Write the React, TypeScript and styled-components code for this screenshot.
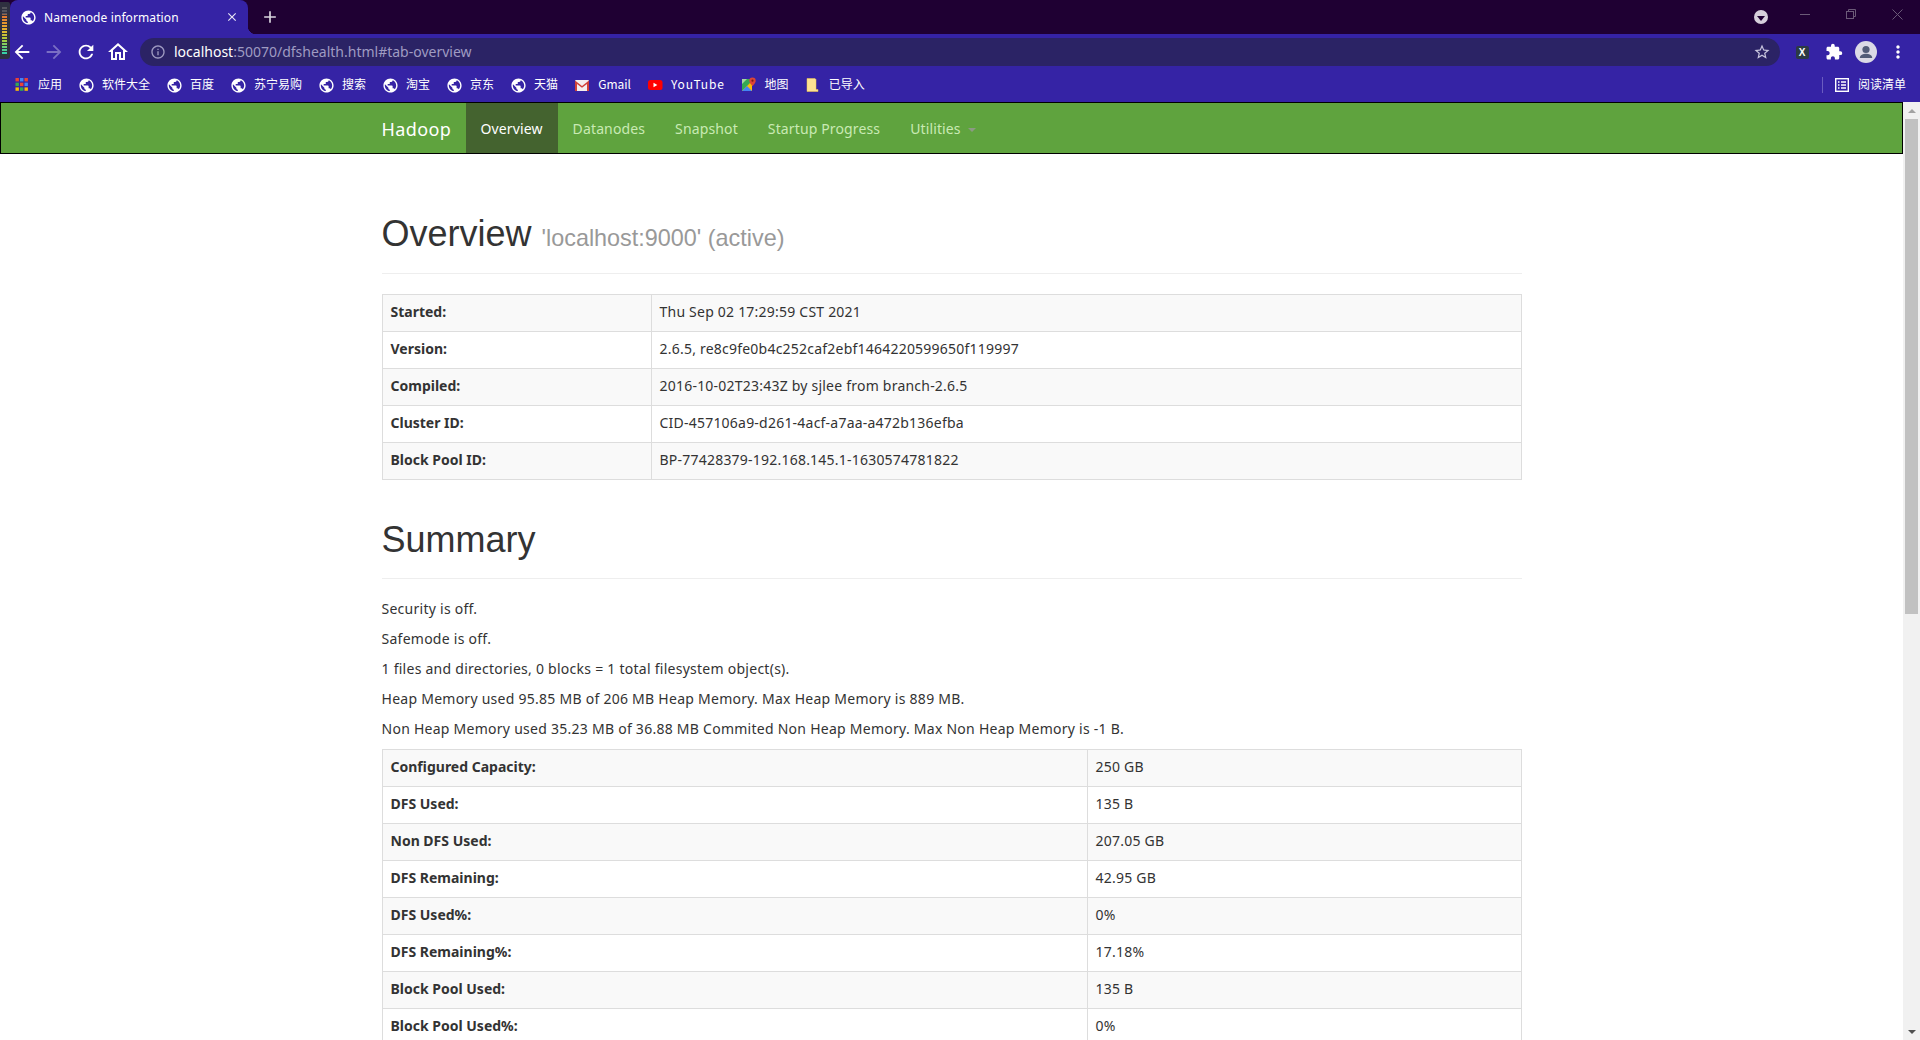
import React from "react";
import styled, { createGlobalStyle } from "styled-components";
import {
  MdArrowBack,
  MdArrowForward,
  MdRefresh,
  MdOutlineHome,
  MdInfoOutline,
  MdStarBorder,
  MdExtension,
  MdMoreVert,
  MdPublic,
  MdClose,
  MdAdd,
} from "react-icons/md";

const uiFont = `"Noto Sans", "Noto Sans CJK SC", sans-serif`;
const cjkFont = `"Noto Sans CJK SC", "Noto Sans", sans-serif`;
const headFont = `"Liberation Sans", Arial, sans-serif`;

const chrome = "#3523a5";

const GlobalStyle = createGlobalStyle`
  * { box-sizing: border-box; }
  html, body { margin: 0; padding: 0; height: 100%; overflow: hidden; }
  body { font-family: ${uiFont}; font-size: 14px; line-height: 20px; color: #333; background: #fff; }
`;

const Window = styled.div`
  position: relative;
  display: flex;
  flex-direction: column;
  height: 100vh;
  overflow: hidden;
`;

const Gauge = styled.div`
  position: absolute;
  left: 0;
  top: 2px;
  width: 10px;
  height: 57px;
  z-index: 3;
  background: #2f3040;
  border-radius: 0 2px 3px 0;
  padding: 5px 3px 5px 2px;
`;

const GaugeBars = styled.div`
  height: 100%;
  background:
    repeating-linear-gradient(to bottom, transparent 0 2px, #2f3040 2px 3px),
    linear-gradient(to bottom, #55555e 0 14%, #e2742f 18%, #e6b62f 50%, #a8cf3c 70%, #2fd0b0 100%);
`;

const TabStrip = styled.div`
  height: 34px;
  display: flex;
  align-items: stretch;
  background: #1f0033;
  flex: none;
`;

const Tab = styled.div`
  position: relative;
  margin-left: 10px;
  width: 238px;
  display: flex;
  align-items: center;
  padding: 0 10px 0 10px;
  gap: 7px;
  background: ${chrome};
  border-radius: 8px 8px 0 0;
  color: #fff;
  font-size: 12px;

  &::after {
    content: "";
    position: absolute;
    left: 100%;
    bottom: 0;
    width: 8px;
    height: 8px;
    background: radial-gradient(circle at 100% 0, transparent 8px, ${chrome} 8.5px);
  }
`;

const TabTitle = styled.span`
  flex: 1;
  padding-top: 1px;
  letter-spacing: 0.1px;
  white-space: nowrap;
`;

const TabClose = styled(MdClose)`
  color: #e8e6f4;
  margin-right: -1px;
`;

const NewTab = styled.div`
  width: 28px;
  margin-left: 8px;
  display: flex;
  align-items: center;
  justify-content: center;
  color: #d9d5de;
`;

const StripRight = styled.div`
  margin-left: auto;
  display: flex;
  align-items: flex-start;
`;

const ProfileDrop = styled.div`
  width: 14px;
  height: 14px;
  margin: 10px 14px 0 0;
  border-radius: 50%;
  background: #d6cfdb;
  display: flex;
  align-items: center;
  justify-content: center;

  &::before {
    content: "";
    margin-top: 2px;
    border-left: 4px solid transparent;
    border-right: 4px solid transparent;
    border-top: 5px solid #1f0033;
  }
`;

const WinButton = styled.div`
  width: 46px;
  height: 28px;
  display: flex;
  align-items: center;
  justify-content: center;
`;

const Toolbar = styled.div`
  height: 34px;
  flex: none;
  display: flex;
  align-items: center;
  padding: 2px 6px 0 6px;
  background: ${chrome};
`;

const ToolButton = styled.div<{ $dim?: boolean }>`
  width: 32px;
  height: 28px;
  flex: none;
  display: flex;
  align-items: center;
  justify-content: center;
  color: ${(p) => (p.$dim ? "#7a6fc4" : "#fff")};
`;

const Omnibox = styled.div`
  flex: 1;
  height: 28px;
  margin: 0 6px 0 6px;
  display: flex;
  align-items: center;
  padding: 0 9px 0 10px;
  border-radius: 14px;
  background: #2b2365;
`;

const InfoIcon = styled(MdInfoOutline)`
  color: #9f9bc2;
  flex: none;
`;

const Url = styled.div`
  flex: 1;
  margin-left: 8px;
  font-size: 14px;
  color: #9f9bc2;
  white-space: nowrap;

  b {
    font-weight: 400;
    color: #fff;
  }
`;

const StarIcon = styled(MdStarBorder)`
  color: #c9c6de;
  flex: none;
`;

const ExtBadge = styled.div`
  width: 13px;
  height: 13px;
  border-radius: 2px;
  background: #2c3a44;
  color: #fff;
  font: 700 10px/13px ${headFont};
  text-align: center;
`;

const BookmarkBar = styled.div`
  height: 34px;
  flex: none;
  display: flex;
  align-items: center;
  padding: 0 14px;
  gap: 16px;
  background: ${chrome};
  color: #fff;
  font-family: ${cjkFont};
  font-size: 12px;
`;

const Bookmark = styled.div<{ $gap?: number }>`
  display: flex;
  align-items: center;
  gap: ${(p) => p.$gap ?? 8}px;
  white-space: nowrap;
`;

const BookmarkLabel = styled.span<{ $spacing?: number }>`
  margin-top: -2px;
  letter-spacing: ${(p) => p.$spacing ?? 0}px;
`;

const BookmarkEnd = styled(Bookmark)`
  margin-left: auto;
  height: 100%;
`;

const BookmarkGlobe = styled(MdPublic)`
  margin: 0 -0.5px;
  color: #fff;
`;

const Separator = styled.div`
  width: 1px;
  height: 16px;
  margin-right: 3px;
  background: #6a5cc0;
`;

const Viewport = styled.div`
  flex: 1;
  min-height: 0;
  display: flex;
`;

const Page = styled.div`
  flex: 1;
  min-width: 0;
  overflow: hidden;
  background: #fff;
`;

const Navbar = styled.nav`
  height: 52px;
  margin-bottom: 20px;
  border: 1px solid #000;
  background: #5fa33e;
  letter-spacing: 0.13px;
`;

const NavInner = styled.div`
  width: 1170px;
  margin: 0 auto;
  padding: 0 15px;
  display: flex;
  height: 100%;
`;

const Brand = styled.div`
  width: 84px;
  font-size: 18px;
  line-height: 52px;
  letter-spacing: 0.4px;
  color: #fff;
`;

const NavLink = styled.div<{ $active?: boolean }>`
  display: flex;
  align-items: center;
  padding: 2px 15px 0;
  color: ${(p) => (p.$active ? "#fff" : "#c9eab4")};
  background: ${(p) => (p.$active ? "#44632f" : "transparent")};
`;

const Caret = styled.span`
  margin: 2px 0 0 7px;
  border-left: 4px solid transparent;
  border-right: 4px solid transparent;
  border-top: 4px solid #8c9a84;
`;

const Container = styled.div`
  display: flow-root;
  width: 1170px;
  margin: 0 auto;
  padding: 0 15px;
  letter-spacing: 0.22px;
`;

const PageHeader = styled.div`
  margin: 40px 0 20px;
  padding-bottom: 9px;
  border-bottom: 1px solid #eee;
`;

const Title = styled.h1`
  margin: 0 0 10px;
  font-family: ${headFont};
  font-size: 36px;
  font-weight: 500;
  line-height: 39.6px;
  letter-spacing: 0;
  color: #333;

  small {
    font-size: 23.4px;
    font-weight: 400;
    line-height: 1;
    color: #999;
  }
`;

const Para = styled.p`
  margin: 0 0 10px;
  letter-spacing: 0.26px;
`;

const InfoTable = styled.table`
  width: 100%;
  border-collapse: collapse;
  margin-bottom: 20px;

  tr:nth-child(odd) {
    background: #f9f9f9;
  }

  th,
  td {
    padding: 7px 8px 9px;
    border: 1px solid #ddd;
    text-align: left;
    line-height: 20px;
    height: 37px;
  }

  th {
    font-weight: 700;
    letter-spacing: 0;
  }
`;

const LabelCell = styled.th<{ $width: number }>`
  width: ${(p) => p.$width}px;
`;

const Scrollbar = styled.div`
  width: 17px;
  flex: none;
  display: flex;
  flex-direction: column;
  background: #f1f1f1;
`;

const ScrollArrow = styled.div<{ $down?: boolean }>`
  height: 17px;
  flex: none;
  display: flex;
  align-items: center;
  justify-content: center;

  &::before {
    content: "";
    border-left: 4px solid transparent;
    border-right: 4px solid transparent;
    ${(p) => (p.$down ? "border-top: 4px solid #505050;" : "border-bottom: 4px solid #a3a3a3;")}
  }
`;

const ScrollTrack = styled.div`
  flex: 1;
  padding: 0 2px;
`;

const ScrollThumb = styled.div`
  height: 495px;
  background: #c1c1c1;
`;

const AppsIcon = () => {
  const colors = ["#ea4335", "#4285f4", "#ea4335", "#34a853", "#ea4335", "#4285f4", "#fbbc04", "#34a853", "#fbbc04"];
  return (
    <svg width="16" height="16" viewBox="0 0 16 16">
      {colors.map((c, i) => (
        <rect key={i} x={1.5 + (i % 3) * 4.5} y={1 + Math.floor(i / 3) * 4.7} width="3.4" height="3.4" fill={c} />
      ))}
    </svg>
  );
};

const GmailIcon = () => (
  <svg width="16" height="16" viewBox="0 0 16 16">
    <rect x="1" y="3" width="14" height="11" rx="1" fill="#f4efef" />
    <path d="M1 3.6 8 9l7-5.400V14h-2V7L8 10.800 3 7v7H1z" fill="#d0423a" />
  </svg>
);

const YoutubeIcon = () => (
  <svg width="16" height="16" viewBox="0 0 16 16">
    <rect x="1" y="3" width="14.500" height="10" rx="2.500" fill="#f00" />
    <path d="M6.500 5.800v4.400L10.300 8z" fill="#fff" />
  </svg>
);

const MapsIcon = () => (
  <svg width="16" height="16" viewBox="0 0 16 16">
    <path d="M1 2h10v12H1z" fill="#34a853" />
    <path d="M1 14 11 4v10z" fill="#fbbc04" />
    <path d="M1 14l5-5 5 5z" fill="#4285f4" />
    <path d="M1 2h5L1 7z" fill="#a8d5a2" />
    <path d="M11.500 0.500a3.200 3.200 0 0 1 3.200 3.200C14.700 6 11.500 9 11.500 9S8.300 6 8.300 3.700a3.200 3.200 0 0 1 3.200-3.200z" fill="#db4437" />
    <circle cx="11.500" cy="3.700" r="1.100" fill="#7c1f18" />
  </svg>
);

const FolderIcon = () => (
  <svg width="16" height="16" viewBox="0 0 16 16">
    <path d="M2 1.500h8l1 1v10h2v2H2z" fill="#fde293" stroke="#f2c84b" strokeWidth="0.500" />
  </svg>
);

const ListIcon = () => (
  <svg width="14" height="14" viewBox="0 0 14 14" fill="none" stroke="#fff">
    <rect x="0.700" y="0.700" width="12.600" height="12.600" strokeWidth="1.400" />
    <path d="M3 4h1.500M6 4h5M3 7h1.500M6 7h5M3 10h1.500M6 10h5" strokeWidth="1.300" />
  </svg>
);

const Avatar = () => (
  <svg width="22" height="22" viewBox="0 0 22 22">
    <circle cx="11" cy="11" r="11" fill="#dbdae6" />
    <circle cx="11" cy="8.500" r="3.600" fill="#525c78" />
    <path d="M4.800 17c0-3 3.600-4.200 6.200-4.200s6.200 1.200 6.200 4.200z" fill="#525c78" />
  </svg>
);

const MinimizeIcon = () => (
  <svg width="10" height="10" viewBox="0 0 10 10">
    <path d="M0 5.500h10" stroke="#6b5a78" strokeWidth="1" />
  </svg>
);

const RestoreIcon = () => (
  <svg width="10" height="10" viewBox="0 0 10 10" fill="none" stroke="#6b5a78">
    <rect x="0.500" y="2.500" width="7" height="7" />
    <path d="M2.500 2.500v-2h7v7h-2" />
  </svg>
);

const CloseIcon = () => (
  <svg width="11" height="11" viewBox="0 0 11 11">
    <path d="M0.500 0.500l10 10M10.500 0.500l-10 10" stroke="#6b5a78" strokeWidth="1" />
  </svg>
);

const bookmarks: { label: string; icon?: React.ReactNode; spacing?: number }[] = [
  { label: "应用", icon: <AppsIcon /> },
  { label: "软件大全" },
  { label: "百度" },
  { label: "苏宁易购" },
  { label: "搜索" },
  { label: "淘宝" },
  { label: "京东" },
  { label: "天猫" },
  { label: "Gmail", icon: <GmailIcon /> },
  { label: "YouTube", icon: <YoutubeIcon />, spacing: 0.8 },
  { label: "地图", icon: <MapsIcon /> },
  { label: "已导入", icon: <FolderIcon /> },
];

const overviewRows = [
  ["Started:", "Thu Sep 02 17:29:59 CST 2021"],
  ["Version:", "2.6.5, re8c9fe0b4c252caf2ebf1464220599650f119997"],
  ["Compiled:", "2016-10-02T23:43Z by sjlee from branch-2.6.5"],
  ["Cluster ID:", "CID-457106a9-d261-4acf-a7aa-a472b136efba"],
  ["Block Pool ID:", "BP-77428379-192.168.145.1-1630574781822"],
];

const summaryRows = [
  ["Configured Capacity:", "250 GB"],
  ["DFS Used:", "135 B"],
  ["Non DFS Used:", "207.05 GB"],
  ["DFS Remaining:", "42.95 GB"],
  ["DFS Used%:", "0%"],
  ["DFS Remaining%:", "17.18%"],
  ["Block Pool Used:", "135 B"],
  ["Block Pool Used%:", "0%"],
];

const summaryLines = [
  "Security is off.",
  "Safemode is off.",
  "1 files and directories, 0 blocks = 1 total filesystem object(s).",
  "Heap Memory used 95.85 MB of 206 MB Heap Memory. Max Heap Memory is 889 MB.",
  "Non Heap Memory used 35.23 MB of 36.88 MB Commited Non Heap Memory. Max Non Heap Memory is -1 B.",
];

function DataTable({ rows, labelWidth }: { rows: string[][]; labelWidth: number }) {
  return (
    <InfoTable>
      <tbody>
        {rows.map(([label, value]) => (
          <tr key={label}>
            <LabelCell $width={labelWidth}>{label}</LabelCell>
            <td>{value}</td>
          </tr>
        ))}
      </tbody>
    </InfoTable>
  );
}

export default function App() {
  return (
    <Window>
      <GlobalStyle />
      <Gauge>
        <GaugeBars />
      </Gauge>

      <TabStrip>
        <Tab>
          <MdPublic size={17} color="#fff" />
          <TabTitle>Namenode information</TabTitle>
          <TabClose size={14} />
        </Tab>
        <NewTab>
          <MdAdd size={20} />
        </NewTab>
        <StripRight>
          <ProfileDrop />
          <WinButton>
            <MinimizeIcon />
          </WinButton>
          <WinButton>
            <RestoreIcon />
          </WinButton>
          <WinButton>
            <CloseIcon />
          </WinButton>
        </StripRight>
      </TabStrip>

      <Toolbar>
        <ToolButton>
          <MdArrowBack size={22} />
        </ToolButton>
        <ToolButton $dim>
          <MdArrowForward size={22} />
        </ToolButton>
        <ToolButton>
          <MdRefresh size={22} />
        </ToolButton>
        <ToolButton>
          <MdOutlineHome size={24} />
        </ToolButton>
        <Omnibox>
          <InfoIcon size={16} />
          <Url>
            <b>localhost</b>:50070/dfshealth.html#tab-overview
          </Url>
          <StarIcon size={18} />
        </Omnibox>
        <ToolButton>
          <ExtBadge>X</ExtBadge>
        </ToolButton>
        <ToolButton>
          <MdExtension size={18} />
        </ToolButton>
        <ToolButton>
          <Avatar />
        </ToolButton>
        <ToolButton>
          <MdMoreVert size={20} />
        </ToolButton>
      </Toolbar>

      <BookmarkBar>
        {bookmarks.map((b) => (
          <Bookmark key={b.label}>
            {b.icon ?? <BookmarkGlobe size={17} />}
            <BookmarkLabel $spacing={b.spacing}>{b.label}</BookmarkLabel>
          </Bookmark>
        ))}
        <BookmarkEnd $gap={9}>
          <Separator />
          <ListIcon />
          <BookmarkLabel>阅读清单</BookmarkLabel>
        </BookmarkEnd>
      </BookmarkBar>

      <Viewport>
        <Page>
          <Navbar>
            <NavInner>
              <Brand>Hadoop</Brand>
              <NavLink $active>Overview</NavLink>
              <NavLink>Datanodes</NavLink>
              <NavLink>Snapshot</NavLink>
              <NavLink>Startup Progress</NavLink>
              <NavLink>
                Utilities
                <Caret />
              </NavLink>
            </NavInner>
          </Navbar>

          <Container>
            <PageHeader>
              <Title>
                Overview <small>'localhost:9000' (active)</small>
              </Title>
            </PageHeader>
            <DataTable rows={overviewRows} labelWidth={269} />

            <PageHeader>
              <Title>Summary</Title>
            </PageHeader>
            {summaryLines.map((line) => (
              <Para key={line}>{line}</Para>
            ))}
            <DataTable rows={summaryRows} labelWidth={705} />
          </Container>
        </Page>

        <Scrollbar>
          <ScrollArrow />
          <ScrollTrack>
            <ScrollThumb />
          </ScrollTrack>
          <ScrollArrow $down />
        </Scrollbar>
      </Viewport>
    </Window>
  );
}
